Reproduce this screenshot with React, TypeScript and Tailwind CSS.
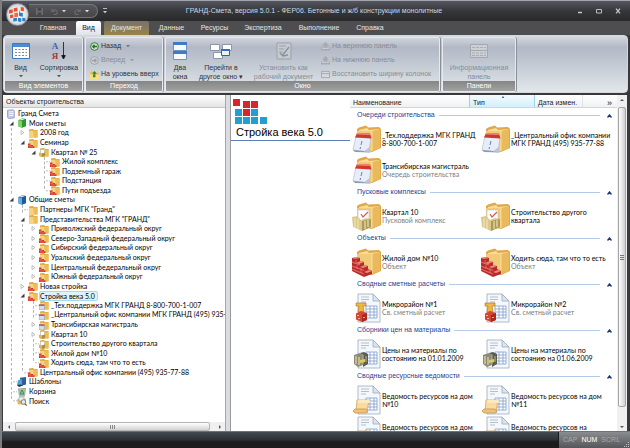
import type { ReactNode } from "react";

type Overlay = "plain" | "bricks" | "calendar" | "box";
type IconKind = Overlay | "db" | "greenBook" | "blueBook" | "templates" | "bin" | "search";
type TreeNode = { label: string; icon: IconKind; open?: boolean; closed?: boolean; selected?: boolean; children?: TreeNode[] };

const tree: TreeNode[] = [
  {
    label: "Мои сметы", icon: "greenBook", open: true,
    children: [
      { label: "2008 год", icon: "plain", closed: true },
      {
        label: "Семинар", icon: "bricks", open: true,
        children: [
          {
            label: "Квартал № 25", icon: "box", open: true,
            children: [
              { label: "Жилой комплекс", icon: "bricks" },
              { label: "Подземный гараж", icon: "bricks" },
              { label: "Подстанция", icon: "bricks" },
              { label: "Пути подъезда", icon: "bricks" },
            ],
          },
        ],
      },
    ],
  },
  {
    label: "Общие сметы", icon: "blueBook", open: true,
    children: [
      { label: 'Партнеры МГК "Гранд"', icon: "plain" },
      {
        label: 'Представительства МГК "ГРАНД"', icon: "plain", open: true,
        children: [
          { label: "Приволжский федеральный округ", icon: "bricks", closed: true },
          { label: "Северо-Западный федеральный округ", icon: "bricks", closed: true },
          { label: "Сибирский федеральный округ", icon: "bricks", closed: true },
          { label: "Уральский федеральный округ", icon: "bricks", closed: true },
          { label: "Центральный федеральный округ", icon: "bricks", closed: true },
          { label: "Южный федеральный округ", icon: "bricks", closed: true },
        ],
      },
      { label: "Новая стройка", icon: "bricks", closed: true },
      {
        label: "Стройка века 5.0", icon: "bricks", open: true, selected: true,
        children: [
          { label: "_Тех.поддержка МГК ГРАНД 8-800-700-1-007", icon: "calendar" },
          { label: "_Центральный офис компании МГК ГРАНД (495) 935-77-88", icon: "calendar" },
          { label: "Трансибирская магистраль", icon: "calendar", closed: true },
          { label: "Квартал 10", icon: "box", closed: true },
          { label: "Строительство другого квартала", icon: "box" },
          { label: "Жилой дом №10", icon: "bricks" },
          { label: "Ходить сюда, там что то есть", icon: "bricks" },
        ],
      },
      { label: "Центральный офис компании (495) 935-77-88", icon: "bricks" },
    ],
  },
  { label: "Шаблоны", icon: "templates" },
  { label: "Корзина", icon: "bin" },
  { label: "Поиск", icon: "search" },
];

function SmallIcon({ kind }: { kind: IconKind }) {
  const folder = (
    <>
      <path d="M1 1.5 5 1l1 1h3.5v7.5H1z" fill="#dda23d" />
      <path d="M1 2.8h8.5v6.4H1z" fill="#f6d47f" />
      <path d="M5 2.8h4.5v6.4H6z" fill="#edbd58" />
    </>
  );
  return (
    <svg viewBox="0 0 10 10" className="size-[10px] shrink-0" aria-hidden="true">
      {(kind === "plain" || kind === "bricks" || kind === "calendar" || kind === "box") && folder}
      {kind === "bricks" && (
        <>
          <path d="M0 5.5h2.5v1.4H5v1.3h1.5V10H0z" fill="#d8382c" />
          <path d="M0 7.4h3M1 9h4" stroke="#f29a88" strokeWidth=".5" />
        </>
      )}
      {kind === "calendar" && (
        <>
          <path d="M0 5h5.4v5H0z" fill="#cfdef3" stroke="#7b98c6" strokeWidth=".6" />
          <path d="M0 4.3h5.4v1.6H0z" fill="#cf5146" />
        </>
      )}
      {kind === "box" && (
        <>
          <path d="M1.5 2.5h4v4h-4z" fill="#fff" stroke="#b5ad98" strokeWidth=".5" />
          <path d="M0 5.4 3 6.4l3-1V9L3 10 0 9z" fill="#d2b96a" />
          <path d="M3 6.4V10l3-1V5.4z" fill="#ac8f42" />
        </>
      )}
      {kind === "db" && (
        <>
          <path d="M1.5 1.2 7 .7l1.3 1v7.2L3 9.6 1.5 8.4z" fill="#c3c9e8" stroke="#747db0" strokeWidth=".6" />
          <path d="M3.2 2.8h4.3M3.2 4.6h4.3M3.2 6.4h4.3" stroke="#fff" strokeWidth=".8" />
        </>
      )}
      {kind === "greenBook" && (
        <>
          <path d="m1.5 2 4-1.7L9 1v7.3L5 9.8 1.5 8.5z" fill="#2e9632" />
          <path d="M1.5 2 5 3v6.8L1.5 8.5z" fill="#7fd36d" />
          <path d="m2.5 1.8 3.4-1.2 2 .4-3 1.3z" fill="#e9f7e4" />
        </>
      )}
      {kind === "blueBook" && (
        <>
          <path d="m1.5 2 4-1.7L9 1v7.3L5 9.8 1.5 8.5z" fill="#1c5c9a" />
          <path d="M1.5 2 5 3v6.8L1.5 8.5z" fill="#66aede" />
          <path d="m2.5 1.8 3.4-1.2 2 .4-3 1.3z" fill="#e6f0fa" />
        </>
      )}
      {kind === "templates" && (
        <>
          <path d="M3 .8 9 0v7.5L3.5 9z" fill="#2c5f98" />
          <path d="m1 3 4-.8v6L2 9.5 0 8z" fill="#5aa0d8" />
          <path d="m0 8 4-.5 2 1-4 1.5z" fill="#30363f" />
        </>
      )}
      {kind === "bin" && (
        <>
          <path d="m1 1.5 8-.7L8 9.5H2z" fill="#9aab9d" />
          <path d="M3 2v7M5 2v7M7 2v7" stroke="#dfe8df" strokeWidth=".5" />
          <path d="m3 7 2-4 2 4z" fill="none" stroke="#2d9a44" strokeWidth="1" />
        </>
      )}
      {kind === "search" && (
        <>
          <path d="M0 3.5 4 2l5 1v5.5H1z" fill="#e4b75a" />
          <path d="M2 1h5v4H2z" fill="#e9edf5" stroke="#8b8b93" strokeWidth=".5" />
          <circle cx="6.5" cy="6" r="2.3" fill="#dceafa" stroke="#76706a" strokeWidth=".8" />
          <path d="m8 7.8 1.7 1.7" stroke="#6d5a3a" strokeWidth="1.1" />
        </>
      )}
    </svg>
  );
}

function Guide({ kind }: { kind: "none" | "line" | "tee" | "end" }) {
  return (
    <span className="flex w-[11px] shrink-0 self-stretch pl-[5px]" aria-hidden="true">
      {kind !== "none" && (
        <svg className="h-full w-[6px]" viewBox="0 0 6 10" preserveAspectRatio="none">
          <path d={kind === "end" ? "M.5 0v5" : "M.5 0v10"} stroke="#b4b4b4" strokeDasharray="3 2" />
          {kind !== "line" && <path d="M2 5h4" stroke="#c0c0c0" strokeDasharray="2 1" />}
        </svg>
      )}
    </span>
  );
}

function Toggle({ open, label }: { open: boolean; label: string }) {
  return (
    <button type="button" aria-expanded={open} aria-label={label} className="flex w-[11px] shrink-0 items-center justify-center self-stretch">
      <svg viewBox="0 0 5 5" className="size-[5px]">
        {open ? <path d="M4.500.5v4h-4z" fill="#3d3d3d" /> : <path d="m1 .5 3 2-3 2z" fill="#fff" stroke="#a5a5a5" strokeWidth=".7" />}
      </svg>
    </button>
  );
}

function Rows({ nodes, trail }: { nodes: TreeNode[]; trail: boolean[] }) {
  return (
    <>
      {nodes.map((n, i) => {
        const last = i === nodes.length - 1;
        return (
          <div key={n.label} className="contents">
            <div className="flex min-h-0 flex-1 items-center pl-[3px] whitespace-nowrap">
              {trail.map((more, t) => (
                <Guide key={t} kind={more ? "line" : "none"} />
              ))}
              {n.open || n.closed ? <Toggle open={!!n.open} label={n.label} /> : <Guide kind={last ? "end" : "tee"} />}
              <SmallIcon kind={n.icon} />
              <span className={n.selected ? "ml-px rounded-xs border border-[#a5d9ee] bg-[#dff3fb] pr-[2px] leading-[8px]" : "ml-[2px]"}>{n.label}</span>
            </div>
            {n.children && <Rows nodes={n.children} trail={[...trail, !last]} />}
          </div>
        );
      })}
    </>
  );
}

type BigKind = "calendar" | "box" | "bricks" | "estimate" | "prices" | "resources";

function BigIcon({ kind }: { kind: BigKind }) {
  const isFolder = kind === "calendar" || kind === "box" || kind === "bricks";
  return (
    <svg viewBox="0 0 30 30" className="size-[30px] shrink-0" aria-hidden="true">
      {isFolder ? (
        <>
          <path d="M5 5 7 3.5l7-2 2 2 11-.5 2 2v19L20 28 5 25z" fill="#dfa84a" />
          <path d="m7 6 8-2 2 2 10-1v18l-8 3-12-3z" fill="#f8dc98" />
          <path d="m20 7 8-2v19l-8 3z" fill="#e9b95b" />
          <path d="M5 7h15v20L5 24z" fill="#f3cb78" />
          <path d="M20 7v20" stroke="#fbe7b5" strokeWidth=".8" />
        </>
      ) : (
        <>
          <path d="M6 1h15l7 7v21H6z" fill="#f4f8fd" stroke="#9ca9bb" strokeWidth=".8" />
          <path d="M21 1v7h7z" fill="#dbe5f1" stroke="#9ca9bb" strokeWidth=".8" />
          <path d="M9 4h8M9 6.5h8M9 9h5" stroke="#b7bec8" strokeWidth="1" />
          <path d="M14 13h11v12H14zM14 16h11M14 19h11M14 22h11M18 13v12M22 13v12" fill="#fff" stroke="#7f9cc8" strokeWidth=".8" />
        </>
      )}
      {kind === "calendar" && (
        <>
          <path d="m4 12 15 1-2 15L1 26z" fill="#e8eef9" stroke="#a9b4ca" strokeWidth=".6" />
          <path d="m1 26 16 1.500 2 1-16-.5z" fill="#8e9bb5" />
          <path d="m5 9 13 .5 1.500 5L3 13.500z" fill="#d0382c" />
          <path d="m5 9 13 .5.500 1.500L4.500 10.500z" fill="#f0897b" />
          <path d="m10 17-1 4M8.500 23l-.4 2" stroke="#6d7ea5" strokeWidth="1" />
          <path d="m12 27.500 6-5-1 5.500z" fill="#b8c5de" />
        </>
      )}
      {kind === "box" && (
        <>
          <path d="M6 9h11v11H6z" fill="#fff" stroke="#bcbcbc" strokeWidth=".6" />
          <path d="m9 13 2 3 5-5" fill="none" stroke="#d35b50" strokeWidth="1.200" />
          <path d="m0 16 5-1 4 4 5-2 5 1v8l-9 4-9-4z" fill="#d9c98f" />
          <path d="m10 20 9-2v8l-9 4z" fill="#ae9954" />
          <path d="M3 17v10M6 18v10M13 20v8M16 19v7" stroke="#f0e6ba" strokeWidth="1.100" />
        </>
      )}
      {kind === "bricks" && (
        <>
          <path d="m0 11 5-1 3 1v3l4 1v3l4 1v3l4 2v3l-8 3L0 24z" fill="#b92b2a" />
          <path d="m0 11 5-1 3 1-5 1zM4 16l5-2 3 1-5 2zM8 20l5-2 3 1-5 2zM12 25l5-2 3 1-5 2z" fill="#ee8b7d" />
          <path d="m0 15 8 3M0 19l12 4.500M0 22l12 5" stroke="#e0695e" strokeWidth="1.200" />
          <path d="M4 13v4M5 18v4M9 21v5" stroke="#e98074" strokeWidth=".7" />
        </>
      )}
      {kind === "estimate" && (
        <>
          <path d="M4 10h10v3h-3l1 6H6l1-6H4z" fill="#f0b83f" stroke="#b77b1c" strokeWidth=".7" />
          <path d="M4 20.500 9 18l6 2v7l-5 2-6-2.500z" fill="#d74430" />
          <path d="m10 22 5-2v7l-5 2z" fill="#a82920" />
          <path d="M6 22v1M7 25v1M12 24v1" stroke="#fff" strokeWidth="1.200" />
        </>
      )}
      {kind === "prices" && (
        <>
          <path d="m2 16 6-2 3 2v10l-5 2-4-3z" fill="#8c8a78" />
          <path d="m8 14 4-1 4 2v10l-5 3V16z" fill="#5b5b4e" />
          <path d="M4 17v8M7 18v8" stroke="#ddd7a6" strokeWidth="1.300" />
          <path d="M11 15.500v10M14 17v6" stroke="#bdbb98" strokeWidth="1" />
          <path d="m8 21 5-1v3l-5 1z" fill="#e3c956" />
        </>
      )}
      {kind === "resources" && (
        <>
          <path d="M5 15h12l-2 12H4z" fill="#f8dba1" stroke="#c99c50" strokeWidth=".7" />
          <path d="M3 24h11l2 3-2 1H3l-2-2z" fill="#eec27a" stroke="#c08e40" strokeWidth=".7" />
          <path d="M5 15c2 0 2 3 0 3h12c2 0 2-3 0-3z" fill="#fbe9c2" />
        </>
      )}
    </svg>
  );
}

type Item = { title: string; sub?: string };
const groups: { name: string; icon: BigKind; items: Item[] }[] = [
  {
    name: "Очереди строительства", icon: "calendar",
    items: [
      { title: "_Тех.поддержка МГК ГРАНД\n8-800-700-1-007" },
      { title: "_Центральный офис компании\nМГК ГРАНД (495) 935-77-88" },
      { title: "Трансибирская магистраль", sub: "Очередь строительства" },
    ],
  },
  { name: "Пусковые комплексы", icon: "box", items: [{ title: "Квартал 10", sub: "Пусковой комплекс" }, { title: "Строительство другого\nквартала" }] },
  { name: "Объекты", icon: "bricks", items: [{ title: "Жилой дом №10", sub: "Объект" }, { title: "Ходить сюда, там что то есть", sub: "Объект" }] },
  { name: "Сводные сметные расчеты", icon: "estimate", items: [{ title: "Микрорайон №1", sub: "Св. сметный расчет" }, { title: "Микрорайон №2", sub: "Св. сметный расчет" }] },
  { name: "Сборники цен на материалы", icon: "prices", items: [{ title: "Цены на материалы по\nсостоянию на 01.01.2009" }, { title: "Цены на материалы по\nсостоянию на 01.06.2009" }] },
  {
    name: "Сводные ресурсные ведомости", icon: "resources",
    items: [
      { title: "Ведомость ресурсов на дом\n№10" },
      { title: "Ведомость ресурсов на дом\n№11" },
      { title: "Ведомость ресурсов на дом\n№12" },
      { title: "Ведомость ресурсов на\nКвартал 1" },
    ],
  },
];

function RibbonGroup({ title, className, children }: { title: string; className: string; children: ReactNode }) {
  return (
    <section className={`flex shrink-0 flex-col overflow-hidden rounded-xs border border-[#e6e9ed] shadow-[1px_0_0_#8b8f96] ${className}`}>
      <div className="flex min-h-0 flex-1">{children}</div>
      <h2 className="h-[10px] bg-linear-to-b from-[#858585] to-[#a2a2a2] text-center leading-[9px] text-white">{title}</h2>
    </section>
  );
}

function BigButton({ icon, lines, disabled, className, arrow }: { icon: ReactNode; lines: string[]; disabled?: boolean; className: string; arrow?: boolean }) {
  return (
    <button type="button" disabled={disabled} className={`flex flex-col items-center pt-[3px] whitespace-nowrap leading-[9px] disabled:text-[#888d95] ${className}`}>
      <span className="mb-[2px] flex h-[20px] items-center">{icon}</span>
      {lines.map((l) => (
        <span key={l}>{l}</span>
      ))}
      {arrow && <Caret className="mt-[2px] fill-[#555]" />}
    </button>
  );
}

function Caret({ className }: { className: string }) {
  return (
    <svg viewBox="0 0 4 4" className={`size-[4px] shrink-0 ${className}`} aria-hidden="true">
      <path d="M0 1h4L2 3.200z" />
    </svg>
  );
}

function LineButton({ icon, children, disabled }: { icon: ReactNode; children: ReactNode; disabled?: boolean }) {
  return (
    <button type="button" disabled={disabled} className="flex h-[14px] items-center gap-[2px] whitespace-nowrap disabled:text-[#888d95]">
      {icon}
      {children}
    </button>
  );
}

function RoundArrow({ back }: { back?: boolean }) {
  return (
    <svg viewBox="0 0 10 10" className="size-[9px]" aria-hidden="true">
      <circle cx="5" cy="5" r="4.300" fill={back ? "#cfe5c5" : "#ccd0d6"} stroke={back ? "#3c6a3c" : "#9ca0a6"} />
      <path d={back ? "M8 5H3m2-2L3 5l2 2" : "M2 5h5M5 3l2 2-2 2"} fill="none" stroke={back ? "#1d7a28" : "#9ca0a6"} strokeWidth="1.400" />
    </svg>
  );
}

function PanelArrow() {
  return (
    <svg viewBox="0 0 10 10" className="size-[9px]" aria-hidden="true">
      <path d="m5 0 4 4H7v2h3v3.500H0V6h3V4H1z" fill="#a5aab2" />
      <path d="M1 7h8" stroke="#d5d8dc" strokeWidth="1" />
    </svg>
  );
}

const menu = ["Главная", "Вид", "Документ", "Данные", "Ресурсы", "Экспертиза", "Выполнение", "Справка"];
const menuStyle = [
  "ml-[33px] w-[36px]",
  "ml-[5px] w-[25px] rounded-t-xs bg-linear-to-b from-white to-[#dfe3e9] text-[#222]",
  "ml-[3px] w-[45px] rounded-t-xs bg-linear-to-b from-[#77736a] to-[#9a8349]",
  "ml-[2px] w-[41px]",
  "ml-[2px] w-[41px]",
  "ml-[2px] w-[52px]",
  "ml-[4px] w-[52px]",
  "ml-[4px] w-[42px]",
];

function ScrollArrow({ d, label }: { d: string; label: string }) {
  return (
    <button type="button" aria-label={label} className="flex size-[9px] shrink-0 items-center justify-center">
      <svg viewBox="0 0 4 4" className="size-[4px]">
        <path d={d} fill="#555" />
      </svg>
    </button>
  );
}

export default function App() {
  return (
    <div className="flex h-screen w-full flex-col overflow-hidden border-l-2 border-[#7d7e80] bg-[#39393b] font-['Liberation_Sans',sans-serif] text-[7px] text-[#30343b]">
      <header className="relative shrink-0">
        <div className="flex h-[21px] items-center border-t border-[#a2a4ad] bg-linear-to-b from-[#55565f] via-[#36373a] to-[#29292b] pl-[27px]">
          <div className="flex h-[14px] w-[69px] shrink-0 items-center gap-[8px] rounded-r-full border border-[#777] border-l-0 bg-linear-to-b from-[#58585c] to-[#464648] pl-[7px]">
            <button type="button" aria-label="Сохранить">
              <svg viewBox="0 0 8 8" className="size-[7px]">
                <path d="M0 0h8v8H0z" fill="#6a6a6e" />
                <path d="M2 0h4v3H2zM2 5h4v3H2z" fill="#45454a" />
              </svg>
            </button>
            <button type="button" aria-label="Отменить" className="flex items-center gap-[4px]">
              <svg viewBox="0 0 8 8" className="size-[7px]">
                <path d="M1 1v3h3M1 4c2-3 6-2 6 1S4 8 3 7" fill="none" stroke="#6b6b70" strokeWidth="1.300" />
              </svg>
              <Caret className="fill-[#d5d5d5]" />
            </button>
            <button type="button" aria-label="Вернуть" className="flex items-center gap-[4px]">
              <svg viewBox="0 0 8 8" className="size-[7px]">
                <path d="M7 1v3H4M7 4C5 1 1 2 1 5s3 3 4 2" fill="none" stroke="#6b6b70" strokeWidth="1.300" />
              </svg>
              <Caret className="fill-[#e5e5e5]" />
            </button>
          </div>
          <button type="button" aria-label="Настроить панель" className="ml-[5px] flex flex-col items-center gap-px">
            <span className="h-px w-[4px] bg-[#bbb]" />
            <Caret className="fill-[#ccc]" />
          </button>
          <h1 className="flex-1 pr-[52px] text-center whitespace-nowrap text-[#c6d8ec]">ГРАНД-Смета, версия 5.0.1 - ФЕР06. Бетонные и ж/б конструкции монолитные</h1>
          <div className="flex items-center gap-[5px] pr-[5px]">
            <button type="button" aria-label="Свернуть" className="flex size-[14px] items-center justify-center">
              <svg viewBox="0 0 6 6" className="size-[6px]"><path d="M1 4.500h4" stroke="#c6c6c6" strokeWidth="1.500" /></svg>
            </button>
            <button type="button" aria-label="Развернуть" className="flex size-[14px] items-center justify-center">
              <svg viewBox="0 0 6 6" className="size-[6px]"><path d="M.5 1.500h5v3.500h-5z" fill="none" stroke="#bcbcbc" /></svg>
            </button>
            <button type="button" aria-label="Закрыть" className="flex size-[14px] items-center justify-center">
              <svg viewBox="0 0 6 6" className="size-[6px]"><path d="m1 .7 4 4.600m0-4.600L1 5.300" stroke="#ccc" strokeWidth="1.200" /></svg>
            </button>
          </div>
        </div>
        <nav className="flex h-[14px] bg-[#4e4e50] text-[#e4e4e4]" aria-label="Лента">
          {menu.map((m, i) => (
            <button key={m} type="button" className={`shrink-0 whitespace-nowrap leading-[14px] ${menuStyle[i]}`}>
              {m}
            </button>
          ))}
        </nav>
        <button type="button" aria-label="Меню приложения" className="absolute top-[3px] left-[4px] flex size-[23px] items-center justify-center rounded-full border border-[#8d8d92] bg-radial from-white via-[#e6e9ee] to-[#aab0ba]">
          <svg viewBox="0 0 16 16" className="size-[17px] shrink-0">
            <path d="m0 4 3.500-1v3.500L0 7zM4.500 2 8 1.500V5l-3.500.5zM11 1l3 .5V5l-3-.5zM1 8.500l3-.5v3l-3 .5z" fill="#e8502f" />
            <path d="m5 6.500 3.500-.5v4L5 10.500zM9.500 3.500l.8 2v3.500l-1-.5z" fill="#ee6b46" />
            <path d="M9.500 6 13 6.500V10l-3.500-.5zM4 11.500l3.500-.5v3L4 14.500zM8.500 11l3 .5V15l-3-.5zM12.500 11l3 .5v3l-3-.5z" fill="#2e7fc8" />
          </svg>
        </button>
      </header>

      <div className="mr-[2px] ml-px flex h-[58px] shrink-0 gap-[2px] rounded-sm border border-[#d4d7dc] bg-linear-to-b from-[#d6dae1] from-0% via-[#b2b8c5] via-20% to-[#e1e7ea] to-100% pt-px">
        <RibbonGroup title="Вид элементов" className="w-[79px]">
          <BigButton
            className="w-[31px]" arrow lines={["Вид"]}
            icon={
              <svg viewBox="0 0 18 16" className="h-[16px] w-[18px]">
                <path d="M.5.5h17v15H.5z" fill="#fff" stroke="#4179bd" />
                <path d="M1 1h16v3H1z" fill="#4f8bd0" />
                <path d="M3 6.500h12M3 9.500h12M3 12.500h12" stroke="#7c8794" strokeDasharray="2 1.500" />
              </svg>
            }
          />
          <BigButton
            className="flex-1" arrow lines={["Сортировка"]}
            icon={
              <span className="flex items-center" aria-hidden="true">
                <span className="flex flex-col font-['Liberation_Serif',serif] text-[9px] leading-[10px] font-bold">
                  <span className="text-[#3866b0]">А</span>
                  <span className="text-[#a3382f]">Я</span>
                </span>
                <svg viewBox="0 0 5 18" className="ml-[3px] h-[18px] w-[5px]"><path d="M2.500 0v15M.7 13.500h3.600l-1.800 3.500z" fill="#111" stroke="#111" strokeWidth=".8" /></svg>
              </span>
            }
          />
        </RibbonGroup>
        <RibbonGroup title="Переход" className="w-[78px]">
          <div className="flex flex-col pt-px pl-[4px]">
            <LineButton icon={<RoundArrow back />}>Назад <Caret className="ml-[3px] fill-[#777]" /></LineButton>
            <LineButton disabled icon={<RoundArrow />}>Вперед <Caret className="ml-[3px] fill-[#999]" /></LineButton>
            <LineButton
              icon={
                <svg viewBox="0 0 10 10" className="size-[9px]">
                  <path d="M0 2h4l1 1h5v7H0z" fill="#e8bd4c" />
                  <path d="M0 5h10v5H0z" fill="#fadf86" />
                  <path d="M3 8h3V4h1.500L5 1 2.500 4H4" fill="#2d8b35" />
                </svg>
              }
            >
              На уровень вверх
            </LineButton>
          </div>
        </RibbonGroup>
        <RibbonGroup title="Окно" className="w-[275px]">
          <BigButton
            className="w-[28px]" lines={["Два", "окна"]}
            icon={
              <svg viewBox="0 0 14 18" className="h-[18px] w-[14px]">
                <path d="M.5.5h13v8H.5zM.5 9.500h13v8H.5z" fill="#f6f9fd" stroke="#6f93bf" />
                <path d="M0 0h14v3H0zM0 9h14v3H0z" fill="#3e7cc4" />
              </svg>
            }
          />
          <BigButton
            className="w-[54px]" lines={["Перейти в", "другое окно ▾"]}
            icon={
              <svg viewBox="0 0 24 18" className="h-[18px] w-[24px]">
                <path d="M1.500 2.500h9v6h-9zM13.500 2.500h9v6h-9zM4.500 10.500h9v6h-9z" fill="#fff" stroke="#8b98aa" />
                <path d="M12.500 7.500h8v6h-8z" fill="#eaf2fb" stroke="#2e62a6" />
                <path d="M12 7h9v2h-9z" fill="#2f6fbd" />
              </svg>
            }
          />
          <BigButton
            className="w-[71px]" disabled lines={["Установить как", "рабочий документ"]}
            icon={
              <svg viewBox="0 0 16 18" className="h-[18px] w-[16px]">
                <path d="M1 1h14v16H1z" fill="#c6cad1" stroke="#9ba0a8" />
                <path d="M3 4h7M3 7h5M3 10h4" stroke="#9ba0a8" />
                <path d="m6 14 7-9M4 11l3 3 5-1" fill="none" stroke="#8d929a" strokeWidth="1.400" />
              </svg>
            }
          />
          <div className="flex flex-1 flex-col pt-px pl-[2px]">
            <LineButton disabled icon={<PanelArrow />}>На верхнюю панель</LineButton>
            <LineButton disabled icon={<PanelArrow />}>На нижнюю панель</LineButton>
            <LineButton
              disabled
              icon={<svg viewBox="0 0 10 10" className="size-[9px]"><path d="M.5 1.500h9v7h-9zM.5 4h9" fill="#d5d8dd" stroke="#a0a4ab" /></svg>}
            >
              Восстановить ширину колонок
            </LineButton>
          </div>
        </RibbonGroup>
        <RibbonGroup title="Панели" className="w-[74px]">
          <BigButton
            className="flex-1" disabled lines={["Информационная", "панель"]}
            icon={
              <svg viewBox="0 0 18 14" className="h-[14px] w-[18px]">
                <path d="M.5.5h17v13H.5zM0 6.500h18" fill="#ccd0d6" stroke="#a3a7ae" />
                <path d="M2 3.500h14M2 9h14M2 11.500h14" stroke="#a9adb4" strokeDasharray="3 1" />
              </svg>
            }
          />
        </RibbonGroup>
      </div>

      <main className="mr-[3px] ml-px flex min-h-0 flex-1 pt-[2px] text-[#1b1b1b]">
        <aside className="flex w-[223px] shrink-0 flex-col border-r border-[#a7a7a7] bg-white">
          <h2 className="h-[13px] shrink-0 border-b border-[#c5c5c5] bg-linear-to-b from-white to-[#e4e4e4] pl-[3px] leading-[13px]">Объекты строительства</h2>
          <div className="flex min-h-0 flex-1 flex-col overflow-hidden pt-px font-[Lato,'Liberation_Sans',sans-serif] text-black">
            <div className="flex h-[297px] flex-col leading-[9px]">
              <div className="flex min-h-0 flex-1 items-center gap-[2px] pl-[3px]">
                <SmallIcon kind="db" />
                Гранд Смета
              </div>
              <Rows nodes={tree} trail={[]} />
            </div>
          </div>
          <div className="flex h-[9px] shrink-0 items-center bg-[#f0f0f0] px-px">
            <ScrollArrow d="M3 0v4L1 2z" label="Влево" />
            <span className="mx-[2px] flex h-[9px] w-[195px] items-center justify-center rounded-xs border border-[#b4b4b4] bg-linear-to-b from-white to-[#d2d2d2]">
              <svg viewBox="0 0 5 4" className="h-[4px] w-[5px]"><path d="M.5 0v4M2.500 0v4M4.500 0v4" stroke="#888" /></svg>
            </span>
            <span className="flex-1" />
            <ScrollArrow d="M1 0v4l2-2z" label="Вправо" />
          </div>
        </aside>

        <section className="flex min-w-0 flex-1 border-l-4 border-[#d9dde1] bg-white">
          <div className="w-[120px] shrink-0 border-l border-[#9a9a9a] pt-[4px]">
            <svg viewBox="0 0 35 26" className="ml-[2px] h-[26px] w-[35px]" aria-label="Логотип">
              <path d="M0 0h7v7H0zM10 2h7v7h-7zM18 2h7v7h-7zM10 10h7v7h-7z" fill="#d9262b" />
              <path d="M2 10h7v7H2zM18 10h7v7h-7zM2 18h7v7H2zM10 18h7v7h-7zM18 18h7v7h-7zM27 18h7v7h-7z" fill="#1f9fd2" />
            </svg>
            <h2 className="border-b border-[#5d7fb8] pb-px pl-[5px] text-[11px] leading-[14px] text-black">Стройка века 5.0</h2>
          </div>
          <div className="flex min-w-0 flex-1 flex-col overflow-hidden">
            <div className="flex h-[13px] shrink-0 items-stretch border-b border-[#d5d5d5] bg-linear-to-b from-white to-[#f0f1f3] leading-[8px]">
              <button type="button" className="w-[119px] shrink-0 pt-[3px] pl-[3px] text-left">Наименование</button>
              <button type="button" className="relative w-[66px] shrink-0 border-x border-[#9dd3ea] bg-linear-to-b from-[#f3fbff] to-[#d4effb] pt-[3px] pl-[3px] text-left">
                Тип
                <svg viewBox="0 0 4 3" className="absolute top-px left-[31px] h-[2px] w-[4px]"><path d="M0 3 2 0l2 3z" fill="#38668c" /></svg>
              </button>
              <button type="button" className="w-[48px] shrink-0 border-r border-[#e2e3e5] pt-[3px] pl-[3px] text-left">Дата измен.</button>
              <button type="button" aria-label="Ещё" className="ml-auto pt-[3px] pr-[5px] text-[9px]">»</button>
            </div>
            {groups.map((g) => (
              <section key={g.name} className="shrink-0">
                <h3 className="flex h-[15px] items-center gap-[4px] pr-[5px] pl-[7px] whitespace-nowrap text-[#1f3f94]">
                  {g.name}
                  <span className="h-px flex-1 bg-[#b4cae6]" />
                  <button type="button" aria-label={g.name} className="ml-[3px]">
                    <svg viewBox="0 0 5 4" className="h-[4px] w-[5px]"><path d="m.5 3.500 2-2.500 2 2.500" fill="none" stroke="#1f3478" strokeWidth="1.400" /></svg>
                  </button>
                </h3>
                <ul className="grid grid-cols-[129px_1fr] pl-[2px] font-[Lato,'Liberation_Sans',sans-serif]">
                  {g.items.map((it) => (
                    <li key={it.title} className="flex h-[31px] items-center">
                      <BigIcon kind={g.icon} />
                      <span className="whitespace-pre leading-[8px] text-black">
                        {it.title}
                        {it.sub && <span className="block text-[#7d7d7d]">{it.sub}</span>}
                      </span>
                    </li>
                  ))}
                </ul>
              </section>
            ))}
          </div>
          <div className="flex w-[10px] shrink-0 flex-col items-center bg-[#f0f0f0]">
            <ScrollArrow d="M0 3h4L2 1z" label="Вверх" />
            <span className="mt-[3px] flex h-[300px] w-[8px] items-center justify-center rounded-xs border border-[#a5a5a5] bg-linear-to-r from-white to-[#cfcfd4]">
              <svg viewBox="0 0 4 5" className="h-[5px] w-[4px]"><path d="M0 .5h4M0 2.500h4M0 4.500h4" stroke="#777" /></svg>
            </span>
            <span className="flex-1" />
            <ScrollArrow d="M0 1h4L2 3z" label="Вниз" />
          </div>
        </section>
      </main>

      <footer className="flex h-[17px] shrink-0 justify-end border-t border-[#6d7278] bg-linear-to-b from-[#444a51] from-0% via-[#2b3036] via-50% to-[#1d1b1c] to-60%">
        <div className="flex w-[72px] items-center gap-[4px] border-l border-[#1a1a1a] bg-linear-to-b from-[#8a8d90] to-[#55575a] pl-[4px] text-[#a5a7aa]">
          <span>CAP</span>
          <span className="text-white">NUM</span>
          <span>SCRL</span>
          <svg viewBox="0 0 6 6" className="ml-auto size-[6px] self-end" aria-hidden="true">
            <path d="M4 0h1v1H4zM2 2h1v1H2zM4 2h1v1H4zM0 4h1v1H0zM2 4h1v1H2zM4 4h1v1H4z" fill="#c4c4c4" />
          </svg>
        </div>
      </footer>
    </div>
  );
}
